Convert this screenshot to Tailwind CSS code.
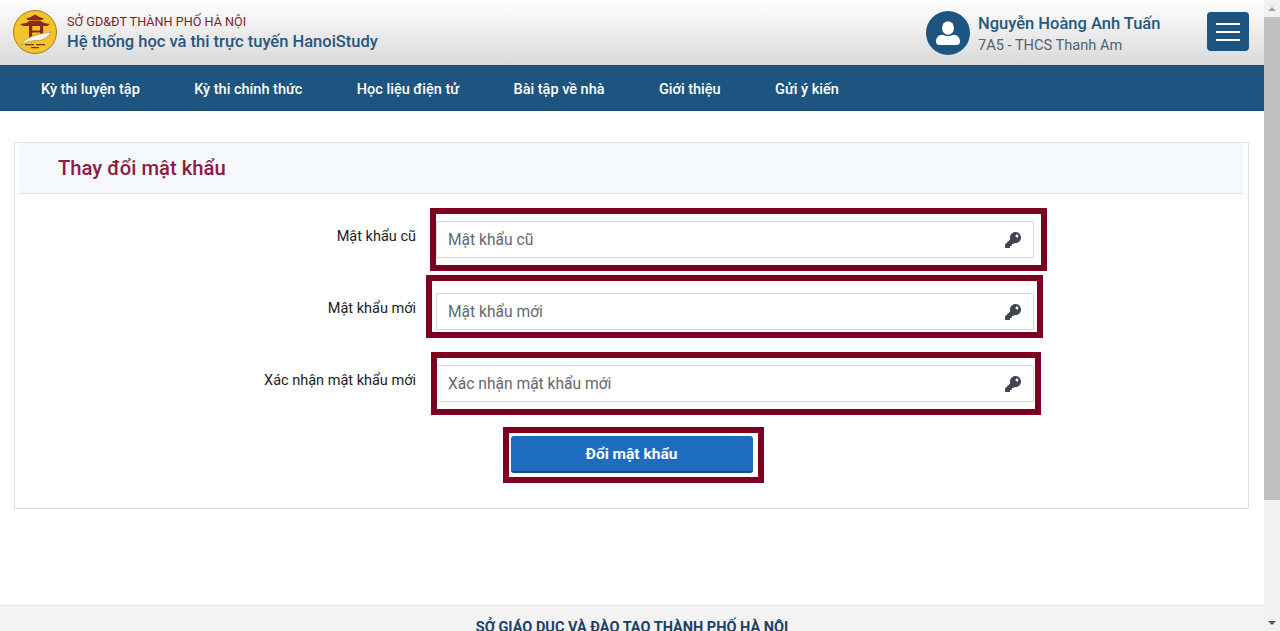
<!DOCTYPE html>
<html lang="vi">
<head>
    <meta charset="UTF-8">
    <meta name="viewport" content="width=device-width, initial-scale=1.0">
    <title>Thay đổi mật khẩu - HanoiStudy</title>
    <script src="https://cdn.jsdelivr.net/npm/@tailwindcss/browser@4"></script>
</head>
<body class="h-[631px] overflow-hidden bg-white font-['Roboto',sans-serif] flex">
    <!-- Page column -->
    <div class="w-[1264px] h-[631px] flex flex-col shrink-0">
        <!-- Header -->
        <header class="h-[65px] bg-gradient-to-b from-white to-[#d9d9d9] flex items-center justify-between pl-[13px] pr-[15px] shrink-0">
            <div class="flex items-center">
                <svg class="w-[44px] h-[44px] mt-[-2px]" viewBox="0 0 44 44">
                    <circle cx="22" cy="22" r="21.5" fill="#f3c32e" stroke="#a97c14"/>
                    <path d="M13 8.500 Q18 7.500 22 4.500 Q26 7.500 31 8.500 L29 10 H15Z" fill="#8a2a1c"/>
                    <path d="M7 14 Q14 13.500 17 10.500 H27 Q30 13.500 37 14 L34 16 H10Z" fill="#8a2a1c"/>
                    <rect x="16" y="16" width="3.200" height="14" fill="#8a2a1c"/>
                    <rect x="27" y="16" width="3.200" height="9" fill="#8a2a1c"/>
                    <rect x="19" y="20.500" width="8" height="2" fill="#8a2a1c"/>
                    <path d="M8 35 Q13 25 38 22 Q34 31 22 30.500 Q14 31 8 35Z" fill="#fbf6e6" stroke="#8f7420" stroke-width=".5"/>
                    <rect x="12" y="34" width="9" height="1.300" fill="#6f3a1a"/>
                    <rect x="23" y="34" width="9" height="1.300" fill="#6f3a1a"/>
                    <rect x="18" y="37" width="8" height="1.200" fill="#6f3a1a"/>
                </svg>
                <div class="ml-[10px] pt-[1px]">
                    <div class="text-[12.65px] leading-[16px] text-[#7d1f2c]">SỞ GD&amp;ĐT THÀNH PHỐ HÀ NỘI</div>
                    <div class="text-[16.5px] leading-[22px] mt-[1px] font-medium text-[#25577f]">Hệ thống học và thi trực tuyến HanoiStudy</div>
                </div>
            </div>
            <div class="flex items-center">
                <div class="w-[44px] h-[44px] rounded-full bg-[#1d5580] flex items-center justify-center">
                    <svg class="w-[26px] h-[26px]" viewBox="0 0 26 26" fill="#fff">
                        <ellipse cx="13" cy="8" rx="6" ry="6.800"/>
                        <path d="M1 21.500c0-4.500 3-6.500 6.500-6.800 3.400 1.600 7.600 1.600 11 0 3.500.3 6.500 2.300 6.500 6.800 0 2-1.300 3.500-3.300 3.500H4.300C2.300 25 1 23.500 1 21.500z"/>
                    </svg>
                </div>
                <div class="ml-[8px] w-[229px]">
                    <div class="text-[16.5px] leading-[24px] font-medium text-[#1f5880]">Nguyễn Hoàng Anh Tuấn</div>
                    <div class="text-[14.6px] leading-[18px] text-[#4f6478]">7A5 - THCS Thanh Am</div>
                </div>
                <div class="w-[42px] h-[39px] mt-[-2px] rounded-[4px] bg-[#1d5580] flex flex-col items-center justify-center gap-[6px]">
                    <span class="block w-[24px] h-[2px] bg-white"></span>
                    <span class="block w-[24px] h-[2px] bg-white"></span>
                    <span class="block w-[24px] h-[2px] bg-white"></span>
                </div>
            </div>
        </header>

        <!-- Nav -->
        <nav class="h-[46px] bg-[#1d5580] shrink-0 flex items-center gap-[54.4px] pl-[41px] pt-[4px] text-[14.5px] font-medium text-white border-t border-[#17476c] border-b">
            <a>Kỳ thi luyện tập</a>
            <a>Kỳ thi chính thức</a>
            <a>Học liệu điện tử</a>
            <a>Bài tập về nhà</a>
            <a>Giới thiệu</a>
            <a>Gửi ý kiến</a>
        </nav>

        <!-- Content -->
        <main class="flex-1 pt-[31px] pl-[14px] pr-[15px]">
            <section class="h-[367px] border border-[#dedede] pl-[4px] pr-[5px]">
                <h1 class="h-[51px] bg-[#f6f9fc] border-b border-[#e0e0e0] pl-[39px] flex items-center text-[20.25px] font-medium text-[#8e1a47]">Thay đổi mật khẩu</h1>
                <form class="pt-[27px] flex flex-col gap-[35px]">
                    <!-- Old password -->
                    <div class="flex">
                        <label class="w-[397px] text-right text-[14.5px] leading-[32px] text-[#1c1c1c]">Mật khẩu cũ</label>
                        <div class="relative ml-[20px] w-[598px] h-[37px] border border-[#d9d9d9] flex items-center justify-between pl-[11px] pr-[12px]">
                            <span class="text-[15.6px] pt-[3px] text-[#5f6973]">Mật khẩu cũ</span>
                            <svg class="w-[16px] h-[16px]" viewBox="0 0 512 512" fill="#3f4650"><path d="M512 176.001C512 273.203 433.202 352 336 352c-11.22 0-22.19-1.062-32.827-3.069l-24.012 27.014A23.999 23.999 0 0 1 261.223 384H224v40c0 13.255-10.745 24-24 24h-40v40c0 13.255-10.745 24-24 24H24c-13.255 0-24-10.745-24-24v-78.059c0-6.365 2.529-12.47 7.029-16.971l161.802-161.802C163.108 213.814 160 195.271 160 176 160 78.798 238.797.001 335.999 0 433.488-.001 512 78.511 512 176.001zM336 128c0 26.51 21.49 48 48 48s48-21.49 48-48-21.49-48-48-48-48 21.49-48 48z"/></svg>
                            <div class="absolute left-[-7px] top-[-14px] w-[617px] h-[63px] border-[6px] border-[#7c0020]"></div>
                        </div>
                    </div>
                    <!-- New password -->
                    <div class="flex">
                        <label class="w-[397px] text-right text-[14.5px] leading-[32px] text-[#1c1c1c]">Mật khẩu mới</label>
                        <div class="relative ml-[20px] w-[598px] h-[37px] border border-[#d9d9d9] flex items-center justify-between pl-[11px] pr-[12px]">
                            <span class="text-[15.6px] pt-[3px] text-[#5f6973]">Mật khẩu mới</span>
                            <svg class="w-[16px] h-[16px]" viewBox="0 0 512 512" fill="#3f4650"><path d="M512 176.001C512 273.203 433.202 352 336 352c-11.22 0-22.19-1.062-32.827-3.069l-24.012 27.014A23.999 23.999 0 0 1 261.223 384H224v40c0 13.255-10.745 24-24 24h-40v40c0 13.255-10.745 24-24 24H24c-13.255 0-24-10.745-24-24v-78.059c0-6.365 2.529-12.47 7.029-16.971l161.802-161.802C163.108 213.814 160 195.271 160 176 160 78.798 238.797.001 335.999 0 433.488-.001 512 78.511 512 176.001zM336 128c0 26.51 21.49 48 48 48s48-21.49 48-48-21.49-48-48-48-48 21.49-48 48z"/></svg>
                            <div class="absolute left-[-11px] top-[-19px] w-[617px] h-[63px] border-[6px] border-[#7c0020]"></div>
                        </div>
                    </div>
                    <!-- Confirm password -->
                    <div class="flex">
                        <label class="w-[397px] text-right text-[14.5px] leading-[32px] text-[#1c1c1c]">Xác nhận mật khẩu mới</label>
                        <div class="relative ml-[20px] w-[598px] h-[37px] border border-[#d9d9d9] flex items-center justify-between pl-[11px] pr-[12px]">
                            <span class="text-[15.6px] pt-[3px] text-[#5f6973]">Xác nhận mật khẩu mới</span>
                            <svg class="w-[16px] h-[16px]" viewBox="0 0 512 512" fill="#3f4650"><path d="M512 176.001C512 273.203 433.202 352 336 352c-11.22 0-22.19-1.062-32.827-3.069l-24.012 27.014A23.999 23.999 0 0 1 261.223 384H224v40c0 13.255-10.745 24-24 24h-40v40c0 13.255-10.745 24-24 24H24c-13.255 0-24-10.745-24-24v-78.059c0-6.365 2.529-12.47 7.029-16.971l161.802-161.802C163.108 213.814 160 195.271 160 176 160 78.798 238.797.001 335.999 0 433.488-.001 512 78.511 512 176.001zM336 128c0 26.51 21.49 48 48 48s48-21.49 48-48-21.49-48-48-48-48 21.49-48 48z"/></svg>
                            <div class="absolute left-[-6px] top-[-14px] w-[610px] h-[63px] border-[6px] border-[#7c0020]"></div>
                        </div>
                    </div>
                    <!-- Submit -->
                    <div class="flex justify-center mt-[-1px] ml-[1px]">
                        <div class="relative">
                            <button type="button" class="block w-[242px] h-[37px] pt-[2px] rounded-[3px] bg-[#1c6cc0] border-b-2 border-[#164a80] text-[15.5px] font-bold text-white">Đổi mật khẩu</button>
                            <div class="absolute left-[-8px] top-[-9px] w-[261px] h-[56px] border-[6px] border-[#7c0020]"></div>
                        </div>
                    </div>
                </form>
            </section>
        </main>

        <!-- Footer, cut off by the window -->
        <footer class="h-[26px] shrink-0 bg-[#f3f3f3] border-t border-[#e2e2e2] pt-[13px] text-center text-[14.5px] leading-[18px] font-bold text-[#1d3f66] overflow-hidden">SỞ GIÁO DỤC VÀ ĐÀO TẠO THÀNH PHỐ HÀ NỘI</footer>
    </div>

    <!-- Browser scrollbar -->
    <div class="w-[16px] h-[631px] bg-[#f1f1f1] flex flex-col items-center shrink-0">
        <div class="h-[17px] w-full flex items-center justify-center">
            <span class="block w-0 h-0 border-x-[4px] border-x-transparent border-b-[4px] border-b-[#a3a3a3]"></span>
        </div>
        <div class="w-full h-[483px] bg-[#c1c1c1]"></div>
        <div class="flex-1 w-full flex items-end justify-center pb-[6px]">
            <span class="block w-0 h-0 border-x-[4px] border-x-transparent border-t-[4px] border-t-[#505050]"></span>
        </div>
    </div>
</body>
</html>
